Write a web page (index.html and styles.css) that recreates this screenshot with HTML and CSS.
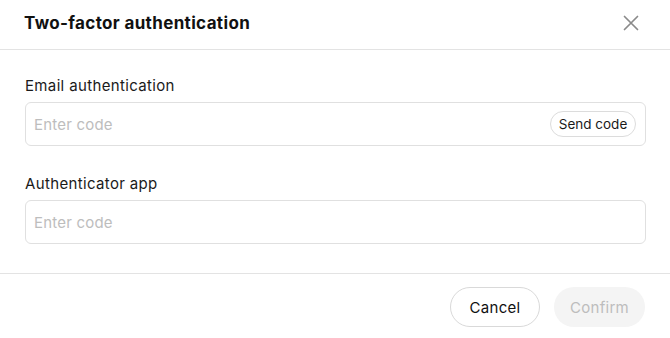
FILE: index.html
```html
<!DOCTYPE html>
<html>
<head>
<meta charset="utf-8">
<link rel="stylesheet" href="styles.css">
</head>
<body>
<div class="dialog">
  <div class="header">
    <h1 class="title">Two-factor authentication</h1>
    <button class="close" aria-label="Close">
      <svg width="16" height="16" viewBox="0 0 16 16"><path d="M1.5 1.5L14.5 14.5M14.5 1.5L1.5 14.5" stroke="#8a8a8a" stroke-width="1.7" fill="none" stroke-linecap="round"/></svg>
    </button>
  </div>
  <div class="body">
    <div class="field">
      <label class="label">Email authentication</label>
      <div class="input">
        <span class="placeholder">Enter code</span>
        <button class="send">Send code</button>
      </div>
    </div>
    <div class="field">
      <label class="label">Authenticator app</label>
      <div class="input">
        <span class="placeholder">Enter code</span>
      </div>
    </div>
  </div>
  <div class="footer">
    <button class="btn cancel">Cancel</button>
    <button class="btn confirm">Confirm</button>
  </div>
</div>
</body>
</html>
```
FILE: styles.css
```css
* { box-sizing: border-box; }
html, body { margin: 0; padding: 0; background: #fff; }
body { font-family: Inter, "Noto Sans", "Liberation Sans", sans-serif; color: #1a1a1a; }
.dialog { width: 670px; }
.header {
  height: 50px;
  border-bottom: 1px solid #e3e3e3;
  display: flex;
  align-items: center;
  justify-content: space-between;
  padding: 0 30px 0 24px;
}
.title { margin: 0; font-size: 17px; font-weight: 700; line-height: 22px; padding-bottom: 3px; color: #111; letter-spacing: 0.35px; }
.close { border: 0; background: none; padding: 0; width: 18px; height: 18px; display: flex; align-items: center; justify-content: center; margin-bottom: 4px; }
.body { padding: 26px 25px 29px 25px; display: flex; flex-direction: column; gap: 28px; border-bottom: 1px solid #e3e3e3; }
.field { display: flex; flex-direction: column; gap: 6px; }
.label { font-size: 15px; line-height: 20px; color: #1a1a1a; letter-spacing: 0.35px; }
.input {
  height: 44px;
  border: 1px solid #e0e0e0;
  border-radius: 6px;
  display: flex;
  align-items: center;
  justify-content: space-between;
  padding: 0 9px 0 8px;
  width: 621px;
}
.placeholder { font-size: 15px; color: #bdbdbd; letter-spacing: 0.2px; }
.send {
  font-family: inherit;
  height: 26px;
  width: 86px;
  padding: 0;
  border: 1px solid #dcdcdc;
  border-radius: 13px;
  background: #fff;
  font-size: 13.5px;
  color: #1a1a1a;
}
.footer { display: flex; justify-content: flex-end; gap: 14px; padding: 13px 25px 0 0; }
.btn { font-family: inherit; height: 40px; border-radius: 20px; font-size: 15px; padding: 0; letter-spacing: 0.3px; }
.cancel { width: 90px; background: #fff; border: 1px solid #d9d9d9; color: #111; }
.confirm { width: 91px; background: #f4f4f4; border: 0; color: #bdbdbd; }
```
